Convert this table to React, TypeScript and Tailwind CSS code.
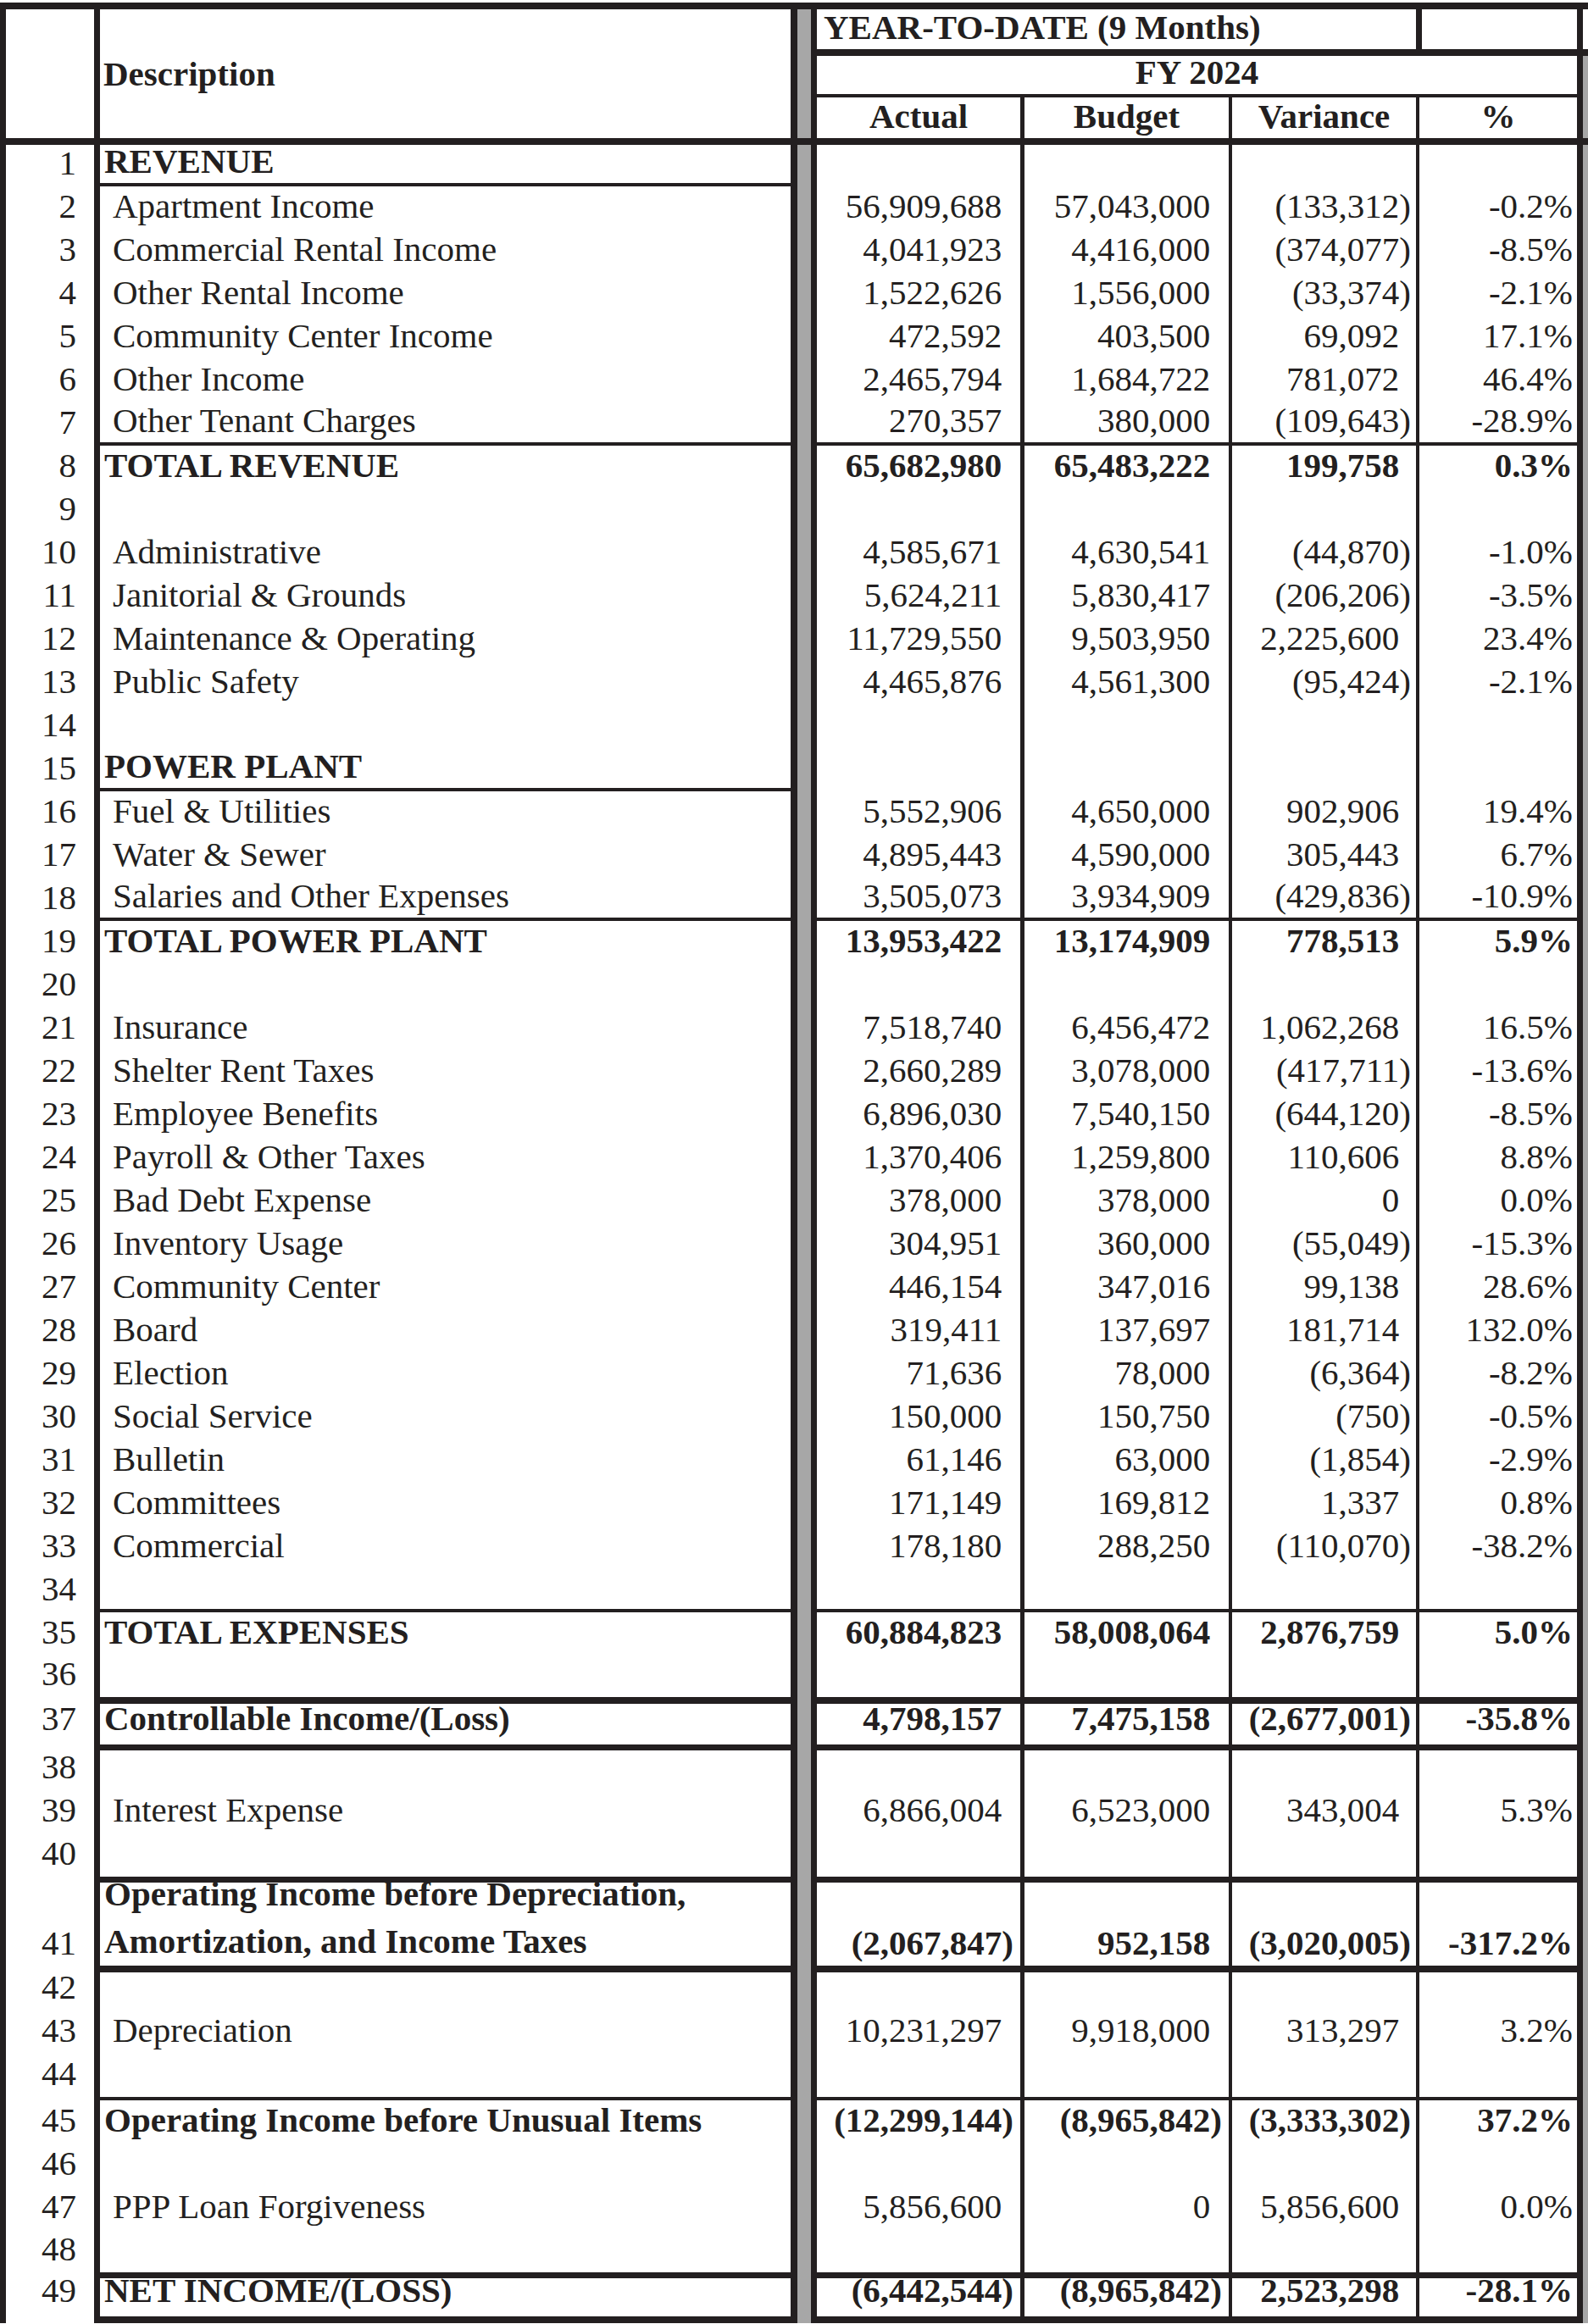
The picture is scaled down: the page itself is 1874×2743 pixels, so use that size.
import React from "react"

type Row = {
  n: number
  d?: string
  v?: [string, string, string, string]
  b?: boolean
  h?: string
  dl?: string
  nl?: string
  ap?: string
  tp?: string
}

// column template shared by header + body (rownum | desc | grey band | actual | budget | variance | % | grey)
const COLS = "grid grid-cols-[118px_815px_31px_245px_245px_221px_193px_6px]"
const INK = "border-[#231f20]"
const GREY = "bg-[#a7a7a7]"

const ROWS: Row[] = [
  { n: 1, d: "REVENUE", b: true, h: "h-[49px]", dl: "border-b-4", tp: "pb-0" },
  { n: 2, d: "Apartment Income", v: ["56,909,688", "57,043,000", "(133,312)", "-0.2%"] },
  { n: 3, d: "Commercial Rental Income", v: ["4,041,923", "4,416,000", "(374,077)", "-8.5%"] },
  { n: 4, d: "Other Rental Income", v: ["1,522,626", "1,556,000", "(33,374)", "-2.1%"] },
  { n: 5, d: "Community Center Income", v: ["472,592", "403,500", "69,092", "17.1%"] },
  { n: 6, d: "Other Income", v: ["2,465,794", "1,684,722", "781,072", "46.4%"] },
  {
    n: 7,
    d: "Other Tenant Charges",
    v: ["270,357", "380,000", "(109,643)", "-28.9%"],
    dl: "border-b-4",
    nl: "border-b-4",
    tp: "pb-0",
  },
  { n: 8, d: "TOTAL REVENUE", b: true, v: ["65,682,980", "65,483,222", "199,758", "0.3%"] },
  { n: 9 },
  { n: 10, d: "Administrative", v: ["4,585,671", "4,630,541", "(44,870)", "-1.0%"] },
  { n: 11, d: "Janitorial & Grounds", v: ["5,624,211", "5,830,417", "(206,206)", "-3.5%"] },
  { n: 12, d: "Maintenance & Operating", v: ["11,729,550", "9,503,950", "2,225,600", "23.4%"] },
  { n: 13, d: "Public Safety", v: ["4,465,876", "4,561,300", "(95,424)", "-2.1%"] },
  { n: 14 },
  { n: 15, d: "POWER PLANT", b: true, dl: "border-b-4", tp: "pb-0" },
  { n: 16, d: "Fuel & Utilities", v: ["5,552,906", "4,650,000", "902,906", "19.4%"] },
  { n: 17, d: "Water & Sewer", v: ["4,895,443", "4,590,000", "305,443", "6.7%"] },
  {
    n: 18,
    d: "Salaries and Other Expenses",
    v: ["3,505,073", "3,934,909", "(429,836)", "-10.9%"],
    dl: "border-b-4",
    nl: "border-b-4",
    tp: "pb-0",
  },
  { n: 19, d: "TOTAL POWER PLANT", b: true, v: ["13,953,422", "13,174,909", "778,513", "5.9%"] },
  { n: 20 },
  { n: 21, d: "Insurance", v: ["7,518,740", "6,456,472", "1,062,268", "16.5%"] },
  { n: 22, d: "Shelter Rent Taxes", v: ["2,660,289", "3,078,000", "(417,711)", "-13.6%"] },
  { n: 23, d: "Employee Benefits", v: ["6,896,030", "7,540,150", "(644,120)", "-8.5%"] },
  { n: 24, d: "Payroll & Other Taxes", v: ["1,370,406", "1,259,800", "110,606", "8.8%"] },
  { n: 25, d: "Bad Debt Expense", v: ["378,000", "378,000", "0", "0.0%"] },
  { n: 26, d: "Inventory Usage", v: ["304,951", "360,000", "(55,049)", "-15.3%"] },
  { n: 27, d: "Community Center", v: ["446,154", "347,016", "99,138", "28.6%"] },
  { n: 28, d: "Board", v: ["319,411", "137,697", "181,714", "132.0%"] },
  { n: 29, d: "Election", v: ["71,636", "78,000", "(6,364)", "-8.2%"] },
  { n: 30, d: "Social Service", v: ["150,000", "150,750", "(750)", "-0.5%"] },
  { n: 31, d: "Bulletin", v: ["61,146", "63,000", "(1,854)", "-2.9%"] },
  { n: 32, d: "Committees", v: ["171,149", "169,812", "1,337", "0.8%"] },
  { n: 33, d: "Commercial", v: ["178,180", "288,250", "(110,070)", "-38.2%"] },
  { n: 34, dl: "border-b-4", nl: "border-b-4" },
  { n: 35, d: "TOTAL EXPENSES", b: true, v: ["60,884,823", "58,008,064", "2,876,759", "5.0%"] },
  { n: 36, h: "h-[57px]", dl: "border-b-8", nl: "border-b-8", ap: "pb-[10px]" },
  {
    n: 37,
    d: "Controllable Income/(Loss)",
    b: true,
    v: ["4,798,157", "7,475,158", "(2,677,001)", "-35.8%"],
    h: "h-[55px]",
    dl: "border-b-[7px]",
    nl: "border-b-[7px]",
    ap: "pb-[12px]",
    tp: "pb-[5px]",
  },
  { n: 38, h: "h-[47px]" },
  { n: 39, d: "Interest Expense", v: ["6,866,004", "6,523,000", "343,004", "5.3%"] },
  { n: 40, h: "h-[58px]", dl: "border-b-[7px]", nl: "border-b-[7px]", ap: "pb-[9px]" },
  {
    n: 41,
    d: "Operating Income before Depreciation,\nAmortization, and Income Taxes",
    b: true,
    v: ["(2,067,847)", "952,158", "(3,020,005)", "-317.2%"],
    h: "h-[106px]",
    dl: "border-b-8",
    nl: "border-b-8",
    ap: "pb-[9px]",
    tp: "pb-[1px]",
  },
  { n: 42, h: "h-[45px]" },
  { n: 43, d: "Depreciation", v: ["10,231,297", "9,918,000", "313,297", "3.2%"] },
  { n: 44, h: "h-[55px]", dl: "border-b-4", nl: "border-b-4", ap: "pb-[6px]" },
  {
    n: 45,
    d: "Operating Income before Unusual Items",
    b: true,
    v: ["(12,299,144)", "(8,965,842)", "(3,333,302)", "37.2%"],
  },
  { n: 46 },
  { n: 47, d: "PPP Loan Forgiveness", v: ["5,856,600", "0", "5,856,600", "0.0%"] },
  { n: 48, h: "h-[57px]", dl: "border-b-[7px]", nl: "border-b-[7px]", ap: "pb-[9px]" },
  {
    n: 49,
    d: "NET INCOME/(LOSS)",
    b: true,
    v: ["(6,442,544)", "(8,965,842)", "2,523,298", "-28.1%"],
    h: "h-[53px]",
    dl: "border-b-8",
    nl: "border-b-8",
    ap: "pb-[13px]",
    tp: "pb-[5px]",
  },
]

// accounting style: positives keep room for the closing paren
function Amount({ v }: { v?: string }) {
  if (!v) return null
  const neg = v.startsWith("(")
  return (
    <span className="whitespace-nowrap">
      {v}
      {!neg && <span className="invisible">)</span>}
    </span>
  )
}

function BodyRow({ r }: { r: Row }) {
  const weight = r.b ? "font-bold" : ""
  const nl = r.nl ?? ""
  const tp = r.tp ?? "pb-[2px]"
  const wrap = r.d && r.d.includes("\n")
  return (
    <div className={`${COLS} grid-rows-1 ${r.h ?? "h-[51px]"}`}>
      <div className={`flex items-end justify-end pr-[21px] ${r.ap ?? "pb-[2px]"} border-l-[7px] border-r-[7px] ${INK}`}>
        {r.n}
      </div>
      <div className={`flex items-end ${tp} ${r.dl ?? ""} ${INK} ${r.b ? "pl-[5px]" : "pl-[15px]"} ${weight}`}>
        {r.d && <span className={wrap ? "whitespace-pre-line leading-[56px]" : "whitespace-nowrap"}>{r.d}</span>}
      </div>
      <div className={`border-l-8 border-r-[7px] ${INK} ${GREY}`} />
      <div className={`flex items-end justify-end pr-[8px] ${tp} border-r-[5px] ${nl} ${INK} ${weight}`}>
        <Amount v={r.v?.[0]} />
      </div>
      <div className={`flex items-end justify-end pr-[8px] ${tp} border-r-4 ${nl} ${INK} ${weight}`}>
        <Amount v={r.v?.[1]} />
      </div>
      <div className={`flex items-end justify-end pr-[6px] ${tp} border-r-4 ${nl} ${INK} ${weight}`}>
        <Amount v={r.v?.[2]} />
      </div>
      <div className={`flex items-end justify-end pr-[5px] ${tp} border-r-[7px] ${nl} ${INK} ${weight}`}>
        <span className="whitespace-nowrap">{r.v?.[3]}</span>
      </div>
      <div className={GREY} />
    </div>
  )
}

export default function App() {
  return (
    <div className="w-[1874px] bg-white pt-[3px] text-[#231f20] font-['Liberation_Serif',serif] text-[41px] leading-[51px]">
      <div className="h-2 bg-[#231f20]" />

      {/* header block */}
      <div className={`${COLS} grid-rows-[55px_49px_48px]`}>
        <div className={`row-span-3 border-l-[7px] border-r-[7px] ${INK}`} />
        <div className="row-span-3 flex items-center pl-[4px] font-bold">Description</div>
        <div className={`row-span-3 border-l-8 border-r-[7px] ${INK} ${GREY}`} />
        <div className={`col-span-3 flex items-end pl-[8px] font-bold whitespace-nowrap border-b-8 border-r-4 ${INK}`}>
          YEAR-TO-DATE (9 Months)
        </div>
        <div className={`border-b-8 border-l-[3px] border-r-[7px] ${INK}`} />
        <div className={`border-b-8 ${INK}`} />
        <div className={`col-span-4 flex items-end justify-center font-bold border-b-4 border-r-[7px] ${INK}`}>FY 2024</div>
        <div className={`row-span-2 ${GREY}`} />
        <div className={`col-start-4 flex items-end justify-center font-bold border-r-[5px] ${INK}`}>Actual</div>
        <div className={`flex items-end justify-center font-bold border-r-4 ${INK}`}>Budget</div>
        <div className={`flex items-end justify-center font-bold border-r-4 ${INK}`}>Variance</div>
        <div className={`flex items-end justify-center font-bold border-r-[7px] ${INK}`}>%</div>
      </div>

      <div className="h-2 bg-[#231f20]" />

      {ROWS.map((r) => (
        <BodyRow key={r.n} r={r} />
      ))}
    </div>
  )
}
